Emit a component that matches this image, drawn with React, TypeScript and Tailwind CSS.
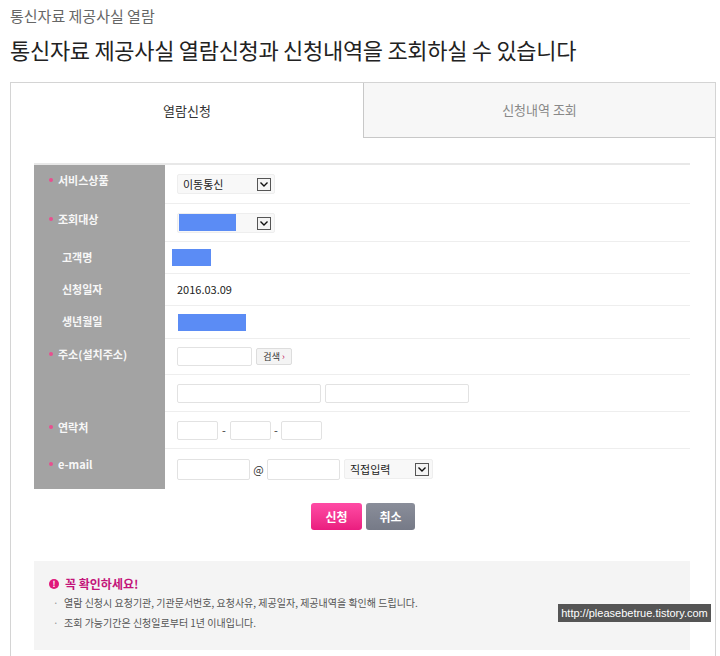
import React from 'react';

const font = { fontFamily: '"Noto Sans CJK KR", "Noto Sans", sans-serif' };

function Select({ label, w, redacted }: { label?: string; w: string; redacted?: boolean }) {
  return (
    <div className={`relative flex h-[20px] items-center rounded-[2px] border border-[#eee] bg-[#f8f8f8] pl-[5px] ${w}`}>
      {redacted ? (
        <div className="h-[17px] w-[57px] -ml-[4px] bg-[#5b8cf5]" />
      ) : (
        <span className="text-[11px] text-[#222]">{label}</span>
      )}
      <span className="absolute right-[3px] top-[3px] flex h-[13px] w-[14px] items-center justify-center border border-[#555] bg-[#f4f4f4]">
        <svg width="8" height="5" viewBox="0 0 8 5">
          <path d="M0.5 0.5 L4 4 L7.5 0.5" fill="none" stroke="#111" strokeWidth="1.4" />
        </svg>
      </span>
    </div>
  );
}

function Input({ w, h = 'h-[19px]' }: { w: string; h?: string }) {
  return <div className={`${w} ${h} rounded-[2px] border border-[#e2e2e2] bg-white`} />;
}

interface Row {
  label: string;
  required?: boolean;
  h: string;
  content: React.ReactNode;
}

const rows: Row[] = [
  { label: '서비스상품', required: true, h: 'h-[39px]', content: <Select label="이동통신" w="w-[98px]" /> },
  { label: '조회대상', required: true, h: 'h-[38px]', content: <Select redacted w="w-[98px]" /> },
  { label: '고객명', h: 'h-[32px]', content: <div className="-ml-[5px] h-[17px] w-[39px] bg-[#5b8cf5]" /> },
  { label: '신청일자', h: 'h-[32px]', content: <span className="text-[11px] text-[#222]">2016.03.09</span> },
  { label: '생년월일', h: 'h-[33px]', content: <div className="ml-[1px] h-[17px] w-[68px] bg-[#5b8cf5]" /> },
  {
    label: '주소(설치주소)',
    required: true,
    h: 'h-[36px]',
    content: (
      <div className="flex items-center gap-[4px]">
        <Input w="w-[75px]" />
        <div className="flex h-[17px] w-[36px] items-center justify-center rounded-[2px] border border-[#ddd] bg-[#f4f4f4] text-[9px] text-[#333]">
          검색 <span className="ml-[2px] text-[#c2185b]">›</span>
        </div>
      </div>
    ),
  },
  {
    label: '',
    h: 'h-[37px]',
    content: (
      <div className="flex items-center gap-[4px]">
        <Input w="w-[144px]" />
        <Input w="w-[144px]" />
      </div>
    ),
  },
  {
    label: '연락처',
    required: true,
    h: 'h-[37px]',
    content: (
      <div className="flex items-center">
        <Input w="w-[41px]" />
        <span className="w-[12px] text-center text-[11px] text-[#333]">-</span>
        <Input w="w-[41px]" />
        <span className="w-[10px] text-center text-[11px] text-[#333]">-</span>
        <Input w="w-[41px]" />
      </div>
    ),
  },
  {
    label: 'e-mail',
    required: true,
    h: 'h-[40px]',
    content: (
      <div className="flex items-center">
        <Input w="w-[73px]" h="h-[21px]" />
        <span className="w-[17px] text-center text-[11px] text-[#333]">@</span>
        <Input w="w-[73px]" h="h-[21px]" />
        <div className="ml-[4px]">
          <Select label="직접입력" w="w-[89px]" />
        </div>
      </div>
    ),
  },
];

export default function App() {
  return (
    <div className="relative h-[656px] w-[720px] overflow-hidden bg-white" style={font}>
      <div className="px-[10px] pt-[5px]">
        <div className="text-[15px] leading-[22px] text-[#666]">통신자료 제공사실 열람</div>
        <h1 className="mt-[7px] text-[22px] leading-[30px] font-normal tracking-[-0.3px] text-[#222]">
          통신자료 제공사실 열람신청과 신청내역을 조회하실 수 있습니다
        </h1>
      </div>

      <div className="ml-[10px] mt-[18px] h-[600px] w-[706px] border-x border-t border-[#d4d4d4]">
        <div className="grid h-[55px] grid-cols-2">
          <div className="flex items-center justify-center text-[13px] text-[#333]">열람신청</div>
          <div className="flex items-center justify-center border-b border-l border-[#c8c8c8] bg-[#f7f7f7] text-[13px] text-[#888]">
            신청내역 조회
          </div>
        </div>

        <div className="px-[23px] pt-[25px]">
          <div className="w-[656px] border-t-2 border-[#e8e8e8]">
            {rows.map((r, i) => (
              <div key={i} className={`flex ${r.h}`}>
                <div className="flex w-[131px] shrink-0 items-start bg-[#a3a3a3] pt-[7px] text-[11px] font-bold text-[#f7f7f7]">
                  {r.required ? (
                    <>
                      <span className="ml-[15px] mr-[5px] mt-[6px] h-[4px] w-[4px] rounded-full bg-[#e8508f]" />
                      <span>{r.label}</span>
                    </>
                  ) : (
                    <span className="ml-[28px]">{r.label}</span>
                  )}
                </div>
                <div className={`flex flex-1 items-center pl-[12px] ${i < rows.length - 1 ? 'border-b border-[#eee]' : ''}`}>
                  {r.content}
                </div>
              </div>
            ))}
          </div>

          <div className="mt-[14px] flex justify-center gap-[4px]">
            <button className="h-[27px] w-[51px] rounded-[3px] bg-gradient-to-b from-[#ff4aa5] to-[#ea1c7f] text-[12px] font-bold text-white">
              신청
            </button>
            <button className="h-[27px] w-[49px] rounded-[3px] bg-gradient-to-b from-[#8a8e9a] to-[#767a87] text-[12px] font-bold text-white">
              취소
            </button>
          </div>

          <div className="mt-[31px] h-[89px] w-[656px] bg-[#f4f4f4] pl-[15px] pt-[14px]">
            <div className="flex items-center gap-[6px]">
              <span className="flex h-[10px] w-[10px] items-center justify-center rounded-full bg-[#e0177a] text-[8px] leading-none font-bold text-white">
                !
              </span>
              <span className="text-[12px] font-bold text-[#c3147a]">꼭 확인하세요!</span>
            </div>
            <div className="text-[10px] leading-[20px] text-[#555]">
              <div className="flex">
                <span className="w-[15px] pl-[4px] text-[#999]">·</span>
                열람 신청시 요청기관, 기관문서번호, 요청사유, 제공일자, 제공내역을 확인해 드립니다.
              </div>
              <div className="flex">
                <span className="w-[15px] pl-[4px] text-[#999]">·</span>
                조회 가능기간은 신청일로부터 1년 이내입니다.
              </div>
            </div>
          </div>
        </div>
      </div>

      <div
        className="absolute left-[558px] top-[604px] flex h-[18px] w-[153px] items-center justify-center bg-[#555] text-[11px] text-white"
        style={{ fontFamily: '"Liberation Sans", Arial, sans-serif' }}
      >
        http://pleasebetrue.tistory.com
      </div>
    </div>
  );
}
